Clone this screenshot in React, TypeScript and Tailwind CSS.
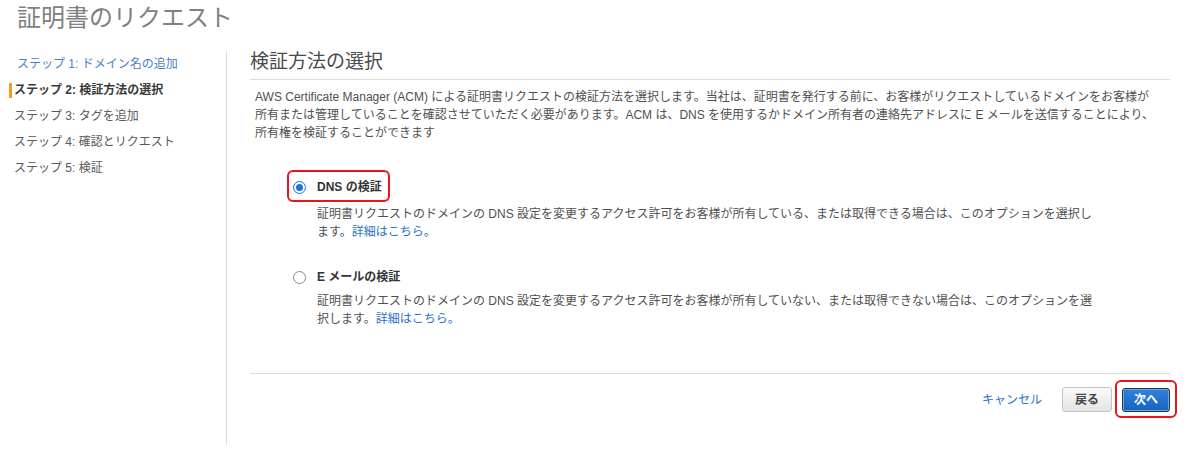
import React from "react";

const font = "font-['Liberation_Sans','Noto_Sans_CJK_JP',sans-serif]";

const steps = [
  { label: "ステップ 1: ドメイン名の追加", state: "done" },
  { label: "ステップ 2: 検証方法の選択", state: "current" },
  { label: "ステップ 3: タグを追加", state: "todo" },
  { label: "ステップ 4: 確認とリクエスト", state: "todo" },
  { label: "ステップ 5: 検証", state: "todo" },
];

function Radio({ checked }: { checked?: boolean }) {
  if (checked) {
    return (
      <span className="flex h-[13px] w-[13px] items-center justify-center rounded-full border border-[#1a73e8] bg-white">
        <span className="h-[7px] w-[7px] rounded-full bg-[#1a73e8]" />
      </span>
    );
  }
  return <span className="h-[13px] w-[13px] rounded-full border border-[#8a8a8a] bg-white" />;
}

function Option({
  checked,
  title,
  lines,
  highlight,
  descGap,
}: {
  checked?: boolean;
  title: string;
  lines: string[];
  highlight?: boolean;
  descGap: string;
}) {
  return (
    <div className="ml-[43px]">
      <div className="relative flex h-[20px] items-center gap-[11px]">
        <Radio checked={checked} />
        <span className="text-[12px] font-bold text-[#333]">{title}</span>
        {highlight && (
          <span className="absolute left-[-6px] top-[-7px] h-[32px] w-[103px] rounded-[6px] border-2 border-[#e8161c]" />
        )}
      </div>
      <p className={`${descGap} pl-[24px] text-[12px] leading-[18px] text-[#505050]`}>
        {lines[0]}
        <br />
        {lines[1]}
        <a className="text-[#2a72c6]">詳細はこちら。</a>
      </p>
    </div>
  );
}

export default function App() {
  return (
    <div className={`${font} h-[450px] w-[1200px] overflow-hidden bg-white`}>
      <h1 className="h-[51px] pl-[17px] pt-[3px] text-[24px] leading-[30px] text-[#808080]">
        証明書のリクエスト
      </h1>

      <div className="flex">
        {/* Steps */}
        <div className="h-[394px] w-[227px] border-r border-[#dddddd]">
          {steps.map((s) => (
            <div key={s.label} className="relative h-[26px] text-[12px] leading-[26px]">
              {s.state === "current" && (
                <span className="absolute left-[9px] top-[6px] h-[15px] w-[3px] bg-[#f7981d]" />
              )}
              <span
                className={
                  s.state === "done"
                    ? "pl-[17px] text-[#4a7fc4]"
                    : s.state === "current"
                    ? "pl-[14px] font-bold text-[#3a3a3a]"
                    : "pl-[14px] text-[#5a5a5a]"
                }
              >
                {s.label}
              </span>
            </div>
          ))}
        </div>

        {/* Main */}
        <div className="ml-[23px] w-[920px]">
          <h2 className="border-b border-[#dddddd] pb-[6px] text-[19px] leading-[22px] text-[#4a4a4a]">
            検証方法の選択
          </h2>
          <p className="mt-[8px] pl-[5px] text-[12px] leading-[18px] text-[#505050]">
            AWS Certificate Manager (ACM) による証明書リクエストの検証方法を選択します。当社は、証明書を発行する前に、お客様がリクエストしているドメインをお客様が
            <br />
            所有または管理していることを確認させていただく必要があります。ACM は、DNS を使用するかドメイン所有者の連絡先アドレスに E メールを送信することにより、
            <br />
            所有権を検証することができます
          </p>

          <div className="mt-[35px]">
            <Option
              checked
              highlight
              title="DNS の検証"
              descGap="mt-[8px]"
              lines={[
                "証明書リクエストのドメインの DNS 設定を変更するアクセス許可をお客様が所有している、または取得できる場合は、このオプションを選択し",
                "ます。",
              ]}
            />
          </div>
          <div className="mt-[26px]">
            <Option
              title="E メールの検証"
              descGap="mt-[5px]"
              lines={[
                "証明書リクエストのドメインの DNS 設定を変更するアクセス許可をお客様が所有していない、または取得できない場合は、このオプションを選",
                "択します。",
              ]}
            />
          </div>

          <div className="mt-[45px] border-t border-[#dddddd]" />

          <div className="mt-[13px] flex items-center justify-end">
            <a className="text-[12px] text-[#2a72c6]">キャンセル</a>
            <button className="ml-[20px] h-[25px] w-[50px] rounded-[3px] border border-[#c4c4c4] bg-gradient-to-b from-[#fafafa] to-[#e4e4e4] text-[12px] font-bold text-[#444]">
              戻る
            </button>
            <div className="relative ml-[10px]">
              <button className="h-[24px] w-[48px] rounded-[3px] border border-[#22354d] bg-gradient-to-b from-[#2f82dc] to-[#1762c0] text-[12px] font-bold text-white shadow-[inset_0_0_0_1px_#6aa5e6]">
                次へ
              </button>
              <span className="absolute left-[-7px] top-[-7px] h-[38px] w-[62px] rounded-[6px] border-2 border-[#e8161c]" />
            </div>
          </div>
        </div>
      </div>
    </div>
  );
}
